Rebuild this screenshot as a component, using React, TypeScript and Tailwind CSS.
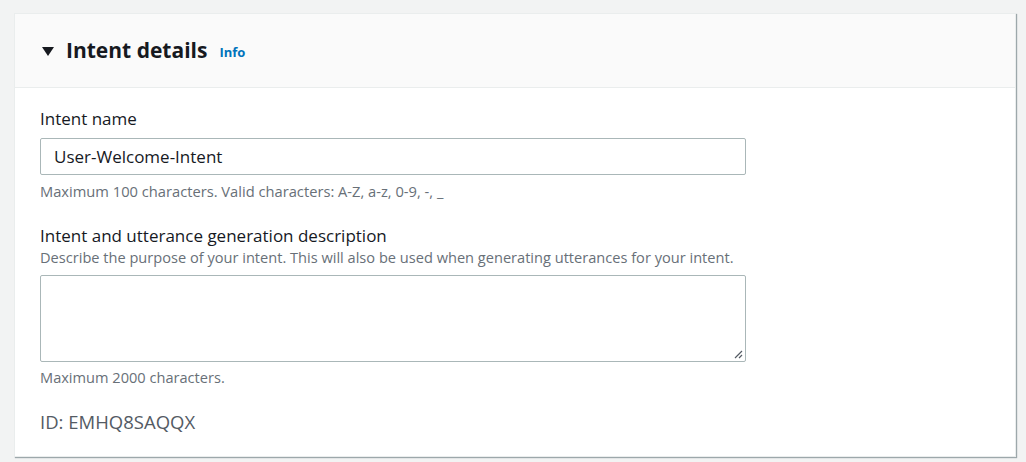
import React from "react";

export default function App() {
  return (
    <div
      className="min-h-[462px] bg-[#f2f3f3] pl-[14px] pr-[10px] pt-[13px]"
      style={{ fontFamily: '"Open Sans", "Noto Sans", Arial, sans-serif' }}
    >
      <div className="w-[1002px] h-[444px] bg-white border border-[#eaeded] shadow-[1px_1px_1px_0_rgba(0,28,36,0.35)]">
        {/* Header */}
        <div className="h-[74px] bg-[#fafafa] border-b border-[#eaeded] flex items-center pl-[27px]">
          <svg width="12" height="9" viewBox="0 0 12 9" className="mr-[12px] mt-[2px]">
            <path d="M0 0 H12 L6 9 Z" fill="#16191f" />
          </svg>
          <h2 className="text-[21px] font-bold text-[#16191f] leading-none">Intent details</h2>
          <a className="ml-[12px] mt-[3px] text-[13px] font-bold text-[#0073bb] leading-none">Info</a>
        </div>

        {/* Body */}
        <div className="pl-[25px] pt-[20px]">
          <label className="block text-[17px] leading-[22px] text-[#16191f]">Intent name</label>
          <div className="mt-[8px] w-[706px] h-[37px] border border-[#aab7b8] rounded-[2px] flex items-center px-[13px] text-[17px] text-[#16191f]">
            User-Welcome-Intent
          </div>
          <p className="mt-[6px] text-[14.7px] leading-[20px] text-[#687078]">
            Maximum 100 characters. Valid characters: A-Z, a-z, 0-9, -, _
          </p>

          <label className="block mt-[24px] text-[17px] leading-[22px] text-[#16191f]">
            Intent and utterance generation description
          </label>
          <p className="text-[14.6px] leading-[20px] text-[#687078]">
            Describe the purpose of your intent. This will also be used when generating utterances for your intent.
          </p>
          <div className="relative mt-[8px] w-[706px] h-[87px] border border-[#aab7b8] rounded-[2px]">
            <svg width="9" height="9" viewBox="0 0 9 9" className="absolute right-[2px] bottom-[2px]">
              <path d="M8 1 L1 8 M8 5 L5 8" stroke="#545b64" strokeWidth="1.2" />
            </svg>
          </div>
          <p className="mt-[5px] text-[14.6px] leading-[20px] text-[#687078]">Maximum 2000 characters.</p>

          <p className="mt-[23px] text-[18.5px] leading-[24px] text-[#545b64]">ID: EMHQ8SAQQX</p>
        </div>
      </div>
    </div>
  );
}
